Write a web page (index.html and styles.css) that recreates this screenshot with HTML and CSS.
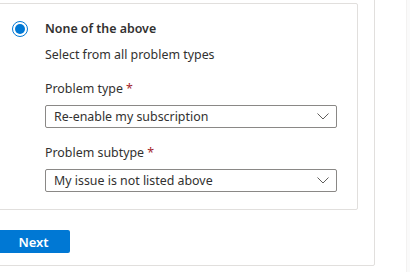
FILE: index.html
```html
<!DOCTYPE html>
<html lang="en">
<head>
	<meta charset="utf-8" />
	<title>Problem details</title>
	<link rel="stylesheet" href="styles.css">
</head>
<body>
	<div class="page">
		<div class="panel">
			<div class="card">
				<span class="radio"><span class="radio-dot"></span></span>
				<div class="card-body">
					<div class="title">None of the above</div>
					<div class="desc">Select from all problem types</div>

					<div class="label">Problem type <span class="req">*</span></div>
					<div class="dropdown">
						<span>Re-enable my subscription</span>
						<svg width="12" height="7" viewBox="0 0 12 7"><polyline points="0.5,0.5 6,6 11.5,0.5" fill="none" stroke="#605e5c" stroke-width="1" /></svg>
					</div>

					<div class="label">Problem subtype <span class="req">*</span></div>
					<div class="dropdown">
						<span>My issue is not listed above</span>
						<svg width="12" height="7" viewBox="0 0 12 7"><polyline points="0.5,0.5 6,6 11.5,0.5" fill="none" stroke="#605e5c" stroke-width="1" /></svg>
					</div>
				</div>
			</div>
			<button class="next">Next</button>
		</div>
		<div class="scroll-strip"></div>
	</div>
</body>
</html>
```

FILE: styles.css
```css
body
{
	margin: 0;
	background-color: #ffffff;
	font-family: "Noto Sans", "Open Sans", sans-serif;
	font-size: 12.4px;
	color: #323130;
	overflow: hidden;
}

.page
{
	display: flex;
	height: 272px;
}

.panel
{
	margin: -14px 0 0 -22px;
	width: 397px;
	height: 280px;
	flex: none;
	box-sizing: border-box;
	padding: 16px 16px 12px 16px;
	border: 1px solid #e1dfdd;
	border-radius: 2px;
	display: flex;
	flex-direction: column;
	align-items: flex-start;
	gap: 20px;
}

.card
{
	align-self: stretch;
	display: grid;
	grid-template-columns: 16px 1fr;
	column-gap: 17px;
	padding: 15px 20px 17px 16px;
	border: 1px solid #e1dfdd;
	border-radius: 2px;
}

.radio
{
	margin-top: 2px;
	width: 16px;
	height: 16px;
	box-sizing: border-box;
	border: 1px solid #0078d4;
	border-radius: 50%;
	display: flex;
	align-items: center;
	justify-content: center;
}

.radio-dot
{
	width: 10px;
	height: 10px;
	border-radius: 50%;
	background-color: #0078d4;
}

.card-body
{
	display: flex;
	flex-direction: column;
}

.title
{
	font-weight: 600;
	line-height: 20px;
}

.desc
{
	margin-top: 6px;
	line-height: 20px;
}

.label
{
	margin-top: 14px;
	line-height: 20px;
}

.req
{
	color: #a4262c;
}

.dropdown
{
	margin-top: 6px;
	height: 23px;
	flex: none;
	box-sizing: border-box;
	border: 1px solid #8a8886;
	border-radius: 2px;
	padding: 0 7px 0 8px;
	display: flex;
	align-items: center;
	justify-content: space-between;
}

.dropdown + .label
{
	margin-top: 15px;
}

.next
{
	width: 75px;
	height: 23px;
	flex: none;
	border: none;
	border-radius: 2px;
	background-color: #0078d4;
	color: #ffffff;
	font-family: inherit;
	font-size: 13px;
	font-weight: 600;
	padding: 0 0 0 2px;
}

.scroll-strip
{
	margin-left: auto;
	width: 3px;
	border-left: 1px solid #f3f2f1;
	background-color: #fafafa;
}
```
